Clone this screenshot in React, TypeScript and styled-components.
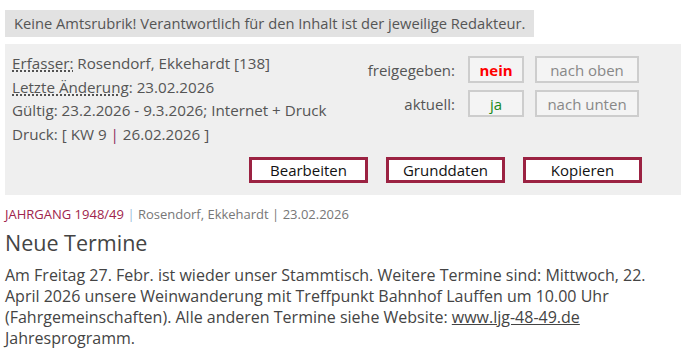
import React from "react";
import styled, { createGlobalStyle } from "styled-components";

const GlobalStyle = createGlobalStyle`
  html, body {
    margin: 0;
    padding: 0;
    background: #fff;
    font-family: "Open Sans", "Liberation Sans", sans-serif;
    color: #444;
  }
`;

const Page = styled.div`
  width: 676px;
  padding: 10px 8px 0 5px;
`;

const Notice = styled.div`
  display: inline-block;
  background: #e2e2e2;
  color: #555;
  font-size: 14.7px;
  line-height: 27px;
  padding: 0 9px 0 9px;
`;

const Panel = styled.div`
  margin-top: 7px;
  background: #efefef;
  padding: 8px 39px 12px 7px;
`;

const Top = styled.div`
  display: flex;
  justify-content: space-between;
  align-items: flex-start;
`;

const Info = styled.div`
  font-size: 15.2px;
  line-height: 23.5px;
  color: #555;
`;

const Abbr = styled.span`
  text-decoration: underline dotted #222;
  text-underline-offset: 2px;
`;

const Sep = styled.span`
  color: #8a2a5a;
`;

const StatusGrid = styled.div`
  display: grid;
  grid-template-columns: auto 56px 104px;
  column-gap: 11px;
  row-gap: 7px;
  margin-top: 4px;
  margin-right: 3px;
  align-items: center;
`;

const Label = styled.span`
  text-align: right;
  font-size: 15px;
  color: #555;
  padding-right: 2px;
`;

const Box = styled.span<{ $tone?: "red" | "green" | "grey" }>`
  box-sizing: border-box;
  height: 27px;
  display: flex;
  align-items: center;
  justify-content: center;
  border: 2px solid #cdcdcd;
  background: #f4f4f4;
  font-size: 15px;
  color: ${p => (p.$tone === "red" ? "#f00" : p.$tone === "green" ? "#1a8a1a" : "#888")};
  font-weight: ${p => (p.$tone === "red" ? 700 : 400)};
`;

const Actions = styled.div`
  display: flex;
  justify-content: flex-end;
  gap: 18px;
  margin-top: 11px;
`;

const Button = styled.button`
  box-sizing: border-box;
  width: 119px;
  height: 26px;
  background: #fff;
  border: 3px solid #9b2242;
  font-family: "Open Sans", "Liberation Sans", sans-serif;
  font-size: 15px;
  color: #111;
  padding: 0;
  line-height: 20px;
`;

const Meta = styled.div`
  margin-top: 10px;
  font-size: 13px;
  color: #777;
`;

const Rubric = styled.span`
  color: #a0244c;
`;

const Pipe = styled.span<{ $blue?: boolean }>`
  color: ${p => (p.$blue ? "#9cc0dc" : "#777")};
`;

const Title = styled.h2`
  margin: 6px 0 0;
  font-size: 21.5px;
  font-weight: 400;
  line-height: 28px;
  color: #444;
`;

const Body = styled.p`
  margin: 8px 0 0;
  font-size: 16px;
  line-height: 21px;
  color: #444;

  a {
    color: #444;
    text-decoration: underline;
  }
`;

export default function App() {
  return (
    <>
      <GlobalStyle />
      <Page>
        <Notice>Keine Amtsrubrik! Verantwortlich für den Inhalt ist der jeweilige Redakteur.</Notice>
        <Panel>
          <Top>
            <Info>
              <div>
                <Abbr>Erfasser:</Abbr> Rosendorf, Ekkehardt [138]
              </div>
              <div>
                <Abbr>Letzte Änderung:</Abbr> 23.02.2026
              </div>
              <div>Gültig: 23.2.2026 - 9.3.2026; Internet + Druck</div>
              <div>
                Druck: [ KW 9 <Sep>|</Sep> 26.02.2026 ]
              </div>
            </Info>
            <StatusGrid>
              <Label>freigegeben:</Label>
              <Box $tone="red">nein</Box>
              <Box>nach oben</Box>
              <Label>aktuell:</Label>
              <Box $tone="green">ja</Box>
              <Box>nach unten</Box>
            </StatusGrid>
          </Top>
          <Actions>
            <Button>Bearbeiten</Button>
            <Button>Grunddaten</Button>
            <Button>Kopieren</Button>
          </Actions>
        </Panel>
        <Meta>
          <Rubric>JAHRGANG 1948/49</Rubric> <Pipe $blue>|</Pipe> Rosendorf, Ekkehardt <Pipe>|</Pipe> 23.02.2026
        </Meta>
        <Title>Neue Termine</Title>
        <Body>
          Am Freitag 27. Febr. ist wieder unser Stammtisch. Weitere Termine sind: Mittwoch, 22. April 2026 unsere
          Weinwanderung mit Treffpunkt Bahnhof Lauffen um 10.00 Uhr (Fahrgemeinschaften). Alle anderen Termine siehe
          Website: <a href="#">www.ljg-48-49.de</a> Jahresprogramm.
        </Body>
      </Page>
    </>
  );
}
